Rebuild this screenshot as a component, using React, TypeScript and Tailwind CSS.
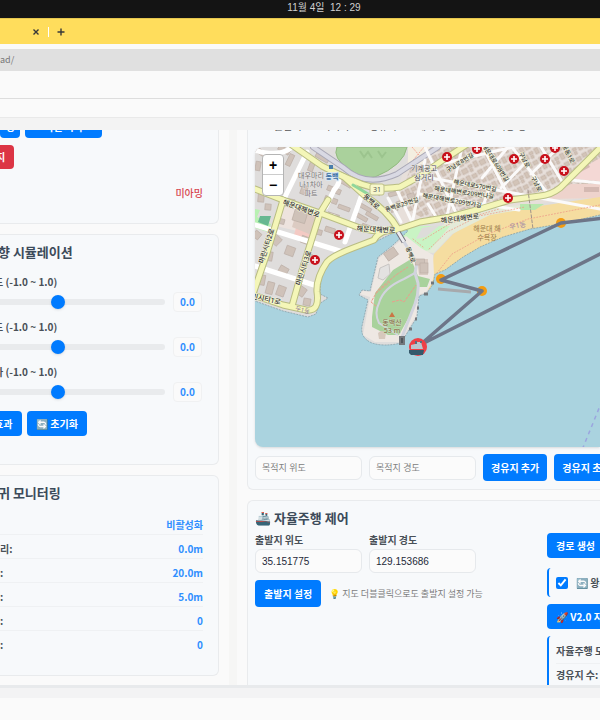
// Boat control dashboard: status panels on the left, map and autopilot on the right
import { useState } from 'react';

const BLOCKS = [
  [262, 153, 14, 5, 35], [258, 166, 5, 9, 10], [284, 150, 12, 5, 30], [290, 160, 5, 12, 25], [304, 190, 6, 9, 20],
  [322, 158, 14, 4, 30], [312, 165, 5, 13, 20], [334, 190, 14, 5, 22], [345, 183, 14, 4, 30], [331, 200, 13, 5, 20],
  [344, 208, 12, 4, 20], [364, 207, 16, 4, 30], [372, 216, 13, 4, 30], [361, 217, 14, 4, 30], [366, 226, 8, 3, 20],
  [333, 216, 12, 5, 18], [330, 230, 10, 5, 18], [377, 192, 8, 4, 30], [393, 194, 9, 4, -15], [401, 203, 9, 5, -20],
  [394, 209, 7, 5, -20], [411, 196, 7, 5, -20], [261, 198, 6, 8, 5], [268, 207, 6, 6, 5], [290, 203, 9, 8, 10],
  [300, 216, 13, 12, 17], [276, 240, 9, 9, 45], [290, 251, 9, 9, 20], [268, 256, 9, 9, 10], [283, 271, 9, 9, 30],
  [305, 240, 8, 7, 20], [308, 256, 7, 7, 35], [262, 280, 6, 10, 10], [270, 288, 7, 12, 15], [281, 291, 8, 10, 20],
  [301, 291, 9, 9, 35], [307, 302, 7, 7, 10], [257, 235, 7, 7, 40], [391, 254, 12, 9, -35], [420, 262, 9, 6, 0],
  [424, 268, 8, 10, 0], [280, 221, 9, 5, 15], [318, 232, 8, 5, 15],
];

const HOSPITALS = [[339, 235], [315, 260], [447, 157], [477, 149], [514, 159], [545, 159], [555, 148], [564, 171], [508, 198]];

const STREETS = [
  'M307 152L283 201', 'M294 145Q315 160 337 177Q342 181 334 190L326 207', 'M361 197L345 242', 'M255 225L343 252',
  'M255 266L314 285', 'M255 150Q279 158 292 147', 'M291 205L334 217',
];

const LANES = [
  'M420 176L600 209', 'M420 194L519 210', 'M445 163L513 147', 'M425 147L457 215', 'M462 147L447 216', 'M483 147L510 199',
  'M512 147L548 194', 'M541 147L563 183', 'M425 160L412 224', 'M388 198L401 222', 'M396 188L412 222', 'M571 180L600 183',
  'M482 178L508 147', 'M428 204L438 220', 'M489 189L482 209', 'M525 163L501 188', 'M558 148L531 174',
];

const MAIN_ROADS = [
  'M289 143L322 166L344 177L364 195Q388 211 398 229',
  'M255 189L283 200L320 213L360 228Q379 233 399 229L420 222L450 217L480 209L510 200L540 196Q551 195 560 188L602 146',
  'M338 174L354 181Q374 191 400 187L420 176L443 160L466 145',
  'M283 200L267 253L253 294',
  'M328 200L320 213L303 267L292 306',
  'M397 229Q379 230 374 240L353 248Q332 256 327 262Q316 278 317 292Q320 312 306 310L283 305L253 295',
];

const COAST = 'M600 215L560 224L530 229L503 237L480 247L463 257L445 270L435 274L433 284L427 293L419 296L417 317L409 330L401 343Q384 347 372 343Q360 338 362 326L368 300L359 295L362 290L370 291L373 278L378 257L392 246L408 231L403 228L373 243L340 253Q326 260 321 277L320 294L328 298L319 304L316 314L308 317L283 311L255 301';

const STREET_LABELS: [string, number, number, number, number][] = [
  ['해운대해변로', 301, 209, 20, 7], ['해운대해변로', 376, 230, 3, 7], ['동백로', 371, 202, 42, 7], ['마린시티2로', 267, 246, -72, 7],
  ['마린시티3로', 304, 268, -72, 7], ['동백로29번길', 402, 205, -18, 6], ['동백로', 410, 255, 70, 6], ['해운대해변로', 460, 219, -7, 7],
  ['해운대로570번길', 475, 186, 10, 6], ['해운대해변로209번나길', 464, 193, 8, 6], ['해운대해변로209번가길', 452, 201, 10, 6],
  ['구남로8번길', 460, 163, -32, 6], ['해운대로608번길', 495, 163, 57, 6], ['구남로', 524, 160, 62, 6], ['구남로', 536, 184, 62, 6],
  ['중동1로', 568, 154, 64, 6], ['마린시티1로', 263, 299, 12, 7],
];

function MapDrawing() {
  return (
    <svg className="block w-full h-full" viewBox="255 147 345 300" preserveAspectRatio="xMinYMin slice" fontFamily="'Noto Sans','Noto Sans CJK KR',sans-serif" textAnchor="middle">
      <defs>
        <pattern id="houses" width="20" height="17" patternUnits="userSpaceOnUse" patternTransform="rotate(-28)">
          <path d="M1 1h5v4H1zM8 1h4v6H8zM14 2h5v4h-5zM1 8h4v6H1zM7 10h6v5H7zM15 9h4v3h-4zM15 13h3v3h-3z" fill="#d3c4b8" stroke="#bfaea2" strokeWidth="0.6" />
        </pattern>
      </defs>
      <rect x="255" y="147" width="345" height="300" fill="#dfdddc" />
      <path d="M412 147H600V196L500 208L400 228L397 190Z" fill="#e7dfda" />
      <path d="M420 147H600V185L560 187L510 198L425 219L397 205L402 188Z" fill="url(#houses)" />
      <path d="M571 175L600 158V181L571 179Z" fill="#f4d8d5" />
      <path d="M571 184H600V198L548 199L554 192Z" fill="#eed3cc" />
      <path d="M575 168L587 162L590 167L577 174ZM584 187h15v5h-15z" fill="#d4b9b2" />

      <path d="M337 147H407Q404 165 375 177Q364 180 349 169Q332 158 337 147Z" fill="#aad19c" stroke="#91b97f" />
      <path d="M360 151l4 6 4-5 4 6M378 151l4 6 4-5" fill="none" stroke="#9cc48e" strokeWidth="2" />
      <path d="M408 147H430L424 164L408 167Z" fill="#f4eee0" />
      <path d="M412 147L425 162M424 147l-14 17" stroke="#f3a999" strokeDasharray="2 1" />
      <path d="M255 209L260 210L257 217L271 224L268 232L255 228Z" fill="#b8f1b3" />
      <path d="M260 216L271 216L268 226L258 222Z" fill="#67b891" />
      <path d="M283 205L301 211L297 231L276 226Z" fill="#ede3de" />
      <path d="M296 228L312 231L311 239L293 238Z" fill="#f4cac4" />
      <path d="M297 210L320 217L314 236L292 227Z" fill="#dccbc2" />

      <path d="M600 197L567 202L533 207L500 209L480 217L453 234L434 254L428 290L600 216Z" fill="#f5dda0" />
      <path d="M420 238L450 221L500 207L532 204L525 209L490 215L452 234L434 253L420 252Z" fill="#e4ead8" />
      <path d="M400 230L420 226H450L430 250L418 252L404 243Z" fill="#c9f4c4" />
      <path d="M422 228l18-3-14 12-10 2z" fill="#dddcd9" />
      <path d="M520 204h24l-9 6h-15z" fill="#b8e8ad" />

      <path d={`${COAST}V447H600Z`} fill="#aad3df" />
      <path d={COAST} fill="none" stroke="#7e98a2" strokeWidth="0.7" strokeDasharray="2 1" />

      <path d="M374 279L379 258L393 247L406 236L421 248L433 255L434 274L432 283L426 292L418 295L416 316L408 329L400 342H375L363 335L370 297L360 294L363 291L371 292Z" fill="#eee8e3" />
      <path d="M411 259L393 270L375 293L372 317V327L388 335H399L409 317L416 300L418 287L427 287L430 279L418 276Z" fill="#a9d29c" />
      <path d="M380 268l9-4 1 10-7 6-5-2z" fill="#e3e2e1" stroke="#c8c5c3" />
      <path d="M417 259h11v16h-9z" fill="#d9cbc2" />
      <path d="M398 232L417 263L415 273L418 283Q419 294 415 304L402 337" fill="none" stroke="#d2d4de" strokeWidth="3" />
      <path d="M415 273L404 279Q383 288 379 303Q374 313 379 323L398 335" fill="none" stroke="#d2d4de" strokeWidth="2" />
      <path d="M376 306l-5-4 7-12 18-15 12-8M392 302l8-2 4 2 12-17M376 293l14-11" fill="none" stroke="#ec9d8b" strokeWidth="1" strokeDasharray="3 1" />
      <path d="M378 333q4-4 8 0l-1 6h-6z" fill="#d6c8bc" />
      <path d="M400 337h4v7h-4z" fill="#50565b" stroke="#74787c" strokeWidth="2" />
      <path d="M409 329h3M415 319h2M417 308h2M424 294h4M431 283h3" stroke="#74787c" strokeWidth="3" />
      <path d="M389 317l3-5 3 5z" fill="#ca7645" />

      {BLOCKS.map(([x, y, w, h, angle]) => (
        <rect key={`${x}-${y}`} x={x - w / 2} y={y - h / 2} width={w} height={h} transform={`rotate(${angle} ${x} ${y})`} fill="#cfc2b9" stroke="#bcafa7" strokeWidth="0.7" />
      ))}

      <g fill="none" strokeLinecap="round" strokeLinejoin="round">
        <path d="M313 147L344 168Q366 188 397 174L438 147" stroke="#aaa9b7" strokeWidth="6" />
        <path d="M313 147L344 168Q366 188 397 174L438 147" stroke="#d9d9e3" strokeWidth="4" />
        {STREETS.map((d) => <path key={d} d={d} stroke="#ffffff" strokeWidth="5" />)}
        {LANES.map((d) => <path key={d} d={d} stroke="#fbfafa" strokeWidth="3" />)}
        {MAIN_ROADS.map((d) => <path key={d} d={d} stroke="#b9bd83" strokeWidth="7" />)}
        {MAIN_ROADS.map((d) => <path key={d} d={d} stroke="#f4f6b8" strokeWidth="5" />)}
        <path d="M353 185l15 9" stroke="#90d69b" strokeWidth="3" />
        <path d="M423 240l28-17 48-14M429 249l18-17 32-16 46-9M423 247l-10-8M437 273l15-19 36-20 40-15 72-14" stroke="#ed9c88" strokeWidth="0.8" strokeDasharray="1 2" />
        <path d="M528 190l5 39" stroke="#9f928a" strokeDasharray="3 2" />
        <path d="M398 232l6 10" stroke="#74737e" strokeWidth="5" strokeLinecap="butt" />
        <path d="M398 232l6 10" stroke="#ececf0" strokeWidth="3" strokeLinecap="butt" />
      </g>

      <rect x="370" y="184" width="14" height="11" rx="2" fill="#f7f7cc" stroke="#bfc18a" />
      <text x="377" y="192" fontSize="7" fill="#555555">31</text>
      <path d="M329 165h4v4h-4z" fill="#4a7dab" />
      <text x="332" y="179" fontSize="7" fontWeight="bold" fill="#3d6fa5" stroke="#d7e7f1" strokeWidth="2" paintOrder="stroke">동백</text>
      <g fontSize="7" fill="#777477" stroke="#e6e4e3" strokeWidth="1" paintOrder="stroke">
        <text x="311" y="178">대우마리</text>
        <text x="311" y="187">나1차아</text>
        <text x="311" y="196">파트</text>
      </g>
      <g fontSize="7" fill="#4e4b4c" stroke="#eeeceb" strokeWidth="1" paintOrder="stroke">
        <text x="424" y="171">기계공고</text>
        <text x="424" y="180">삼거리</text>
      </g>
      {STREET_LABELS.map(([name, x, y, angle, size]) => (
        <text key={`${name}-${x}`} x={x} y={y} fontSize={size} fontWeight="500" fill="#33332f" stroke="#f6f6df" strokeWidth="1" paintOrder="stroke" dominantBaseline="middle" transform={`rotate(${angle} ${x} ${y})`}>{name}</text>
      ))}
      <g fontSize="7" fill="#9b7b46">
        <text x="487" y="231">해운대 해</text>
        <text x="487" y="240">수욕장</text>
      </g>
      <text x="518" y="228" fontSize="7" fill="#9c86a6" transform="rotate(-10 518 228)">우1동</text>
      <text x="302" y="312" fontSize="6" fill="#8d789a" transform="rotate(15 302 312)">우1동</text>
      <g fontSize="7" fill="#845f42" stroke="#c7dfba" strokeWidth="1" paintOrder="stroke">
        <text x="392" y="325">동백산</text>
        <text x="392" y="333">53 m</text>
      </g>

      {HOSPITALS.map(([x, y]) => (
        <g key={`${x}-${y}`}>
          <circle cx={x} cy={y} r="5" fill="#c8101b" />
          <path d={`M${x - 3} ${y}h6M${x} ${y - 3}v6`} stroke="#ffffff" strokeWidth="1.6" />
        </g>
      ))}

      <path d="M602 401L582 450" stroke="#9ba5df" strokeWidth="1.5" strokeDasharray="4 4" />
      <g fill="#f39c12">
        <circle cx="561" cy="223" r="5" />
        <circle cx="441" cy="279" r="5" />
        <circle cx="482" cy="291" r="5" />
      </g>
      <path d="M438 289L471 292" stroke="#a7a9ac" strokeWidth="3" />
      <path d="M604 218L561 223L441 280L482 291L420 345L604 252" fill="none" stroke="#6d7588" strokeWidth="3.5" strokeLinejoin="round" />
      <circle cx="418" cy="347" r="9" fill="#ef4046" />
      <path d="M409 350h15l-1 5h-12l-2-2z" fill="#34586b" />
      <path d="M411 349v-4l4-1 1-2h5l2 7z" fill="#b9c6ce" />
      <path d="M415 341h2v3h-2zM420 341h2v2h-2z" fill="#58717e" />
    </svg>
  );
}

function Field({ label, value, placeholder }: { label?: string; value?: string; placeholder?: string }) {
  return (
    <label className="block w-[107px] shrink-0">
      {label && <span className="block mb-px text-[10px] leading-4 font-bold text-[#495057]">{label}</span>}
      <input type="text" defaultValue={value} placeholder={placeholder} aria-label={label || placeholder}
        className="block w-full h-6 px-1.5 text-[10px] placeholder:text-[9px] font-['Liberation_Sans','Noto_Sans_CJK_KR',sans-serif] text-gray-800 placeholder-[#808080] bg-[#fbfbfb] border border-[#e6e9ec] rounded-md" />
    </label>
  );
}

function Slider({ label }: { label: string }) {
  const [value, setValue] = useState(0);
  return (
    <label className="block h-[45px]">
      <span className="block -ml-1.5 text-[10px] leading-4 font-bold text-[#495057]">{label}</span>
      <span className="flex items-center gap-2 h-5 mt-0.5">
        <input type="range" min={-1} max={1} step={0.1} value={value} onChange={(e) => setValue(Number(e.target.value))}
          className="flex-1 min-w-0 -ml-[50px] h-1.5 appearance-none rounded-full bg-[#e9ebed] [&::-webkit-slider-thumb]:appearance-none [&::-webkit-slider-thumb]:size-3.5 [&::-webkit-slider-thumb]:rounded-full [&::-webkit-slider-thumb]:bg-[#007bff] [&::-webkit-slider-thumb]:shadow" />
        <span className="w-[29px] h-5 border border-[#f0f1f2] rounded-sm bg-[#fafafa] text-center text-[10px] leading-[18px] font-bold text-[#318fff]">{value.toFixed(1)}</span>
      </span>
    </label>
  );
}

const MONITOR = [
  { label: '', value: '비활성화' },
  { label: '리:', value: '0.0m' },
  { label: ':', value: '20.0m' },
  { label: ':', value: '5.0m' },
  { label: ':', value: '0' },
  { label: ':', value: '0' },
];

const LEGEND = [
  { text: '출발지', dot: 'bg-[#62c96f]' },
  { text: '목적지', dot: 'bg-[#f0706b]' },
  { text: '경유지', dot: 'bg-[#f4bd3c]' },
  { text: '계획 경로', dot: '' },
  { text: '실제 이동 경로', dot: '' },
];

const BTN = 'shrink-0 rounded bg-[#007bff] text-white text-[10px] font-bold whitespace-nowrap';

export default function App() {
  const [roundTrip, setRoundTrip] = useState(true);

  return (
    <div className="h-screen flex flex-col overflow-hidden bg-[#fafafa] font-['Noto_Sans_CJK_KR',sans-serif]">
      <header className="shrink-0">
        <div className="h-[18px] bg-[#141414] pl-12 text-center text-[10px] leading-4 text-[#d0d0d0] whitespace-pre font-['Liberation_Sans','Noto_Sans_CJK_KR',sans-serif]">11월 4일  12 : 29</div>
        <div className="h-[26px] bg-[#ffdd5c] border-t border-[#e5c64f] flex items-center gap-[7px] pl-[31px]">
          <button aria-label="Close tab" className="size-2.5">
            <svg viewBox="0 0 10 10" className="size-2.5"><path d="M2.5 2.5l5 5M7.5 2.5l-5 5" stroke="#383838" strokeWidth="1.4" /></svg>
          </button>
          <span className="w-px h-2.5 bg-white" />
          <button aria-label="New tab" className="size-2.5">
            <svg viewBox="0 0 10 10" className="size-2.5"><path d="M5 1.5v7M1.5 5h7" stroke="#383838" strokeWidth="1.4" /></svg>
          </button>
        </div>
        <div className="h-[22px] mt-[5px] bg-[#e0e0e0] text-[9px] leading-[22px] text-[#777777]">ad/</div>
        <div className="h-7 border-b border-[#dddddd]" />
        <div className="h-[18px]" />
        <div className="h-[13px] bg-[#f3f3f3] border-t border-[#e9e9e9]" />
      </header>

      <main className="flex-1 min-h-0 flex overflow-hidden">
        <div className="w-[229px] shrink-0 pr-2.5 flex flex-col gap-2.5 overflow-hidden">
          <section className="h-[94px] shrink-0 bg-[#f7f9fb] border-r border-b border-[#e9ebed] rounded-br-md pr-[15px]">
            <div className="h-2 flex items-end gap-[5px] overflow-hidden">
              <button className={`${BTN} w-5 h-6 overflow-hidden`}>경</button>
              <button className={`${BTN} w-[77px] h-6`}>미션 시작</button>
            </div>
            <button className="block w-3.5 h-6 mt-[7px] rounded-r bg-[#dc3545] text-white text-[10px] leading-6 font-bold overflow-hidden">
              <span className="block -ml-1 text-left">지</span>
            </button>
            <p className="mt-4 text-right text-[10px] leading-4 font-medium text-[#d84850]">미아밍</p>
          </section>

          <section className="h-[231px] shrink-0 bg-[#f7f9fb] border border-l-0 border-[#e9ebed] rounded-r-md pr-4 pt-[7px]">
            <h2 className="-ml-0.5 text-[13px] leading-5 font-bold text-[#3c4b5a]">향 시뮬레이션</h2>
            <div className="mt-3">
              <Slider label="드 (-1.0 ~ 1.0)" />
              <Slider label="드 (-1.0 ~ 1.0)" />
              <Slider label="차 (-1.0 ~ 1.0)" />
            </div>
            <div className="flex gap-[5px] mt-[2px]">
              <button className={`${BTN} w-[22px] h-[25px] rounded-l-none overflow-hidden`}><span className="block -ml-1.5 text-left">효과</span></button>
              <button className={`${BTN} w-[60px] h-[25px]`}>🔄 초기화</button>
            </div>
          </section>

          <section className="h-[201px] shrink-0 bg-[#f7f9fb] border border-l-0 border-[#e9ebed] rounded-r-md pr-[15px] pt-[7px]">
            <h2 className="-ml-0.5 text-[13px] leading-5 font-bold text-[#3c4b5a]">귀 모니터링</h2>
            <dl className="mt-2 text-[10px] divide-y divide-[#eff1f3]">
              {MONITOR.map((m, i) => (
                <div key={i} className="flex justify-between h-6 pt-1 leading-5">
                  <dt className="font-bold text-[#495057]">{m.label}</dt>
                  <dd className="font-bold text-[#2f8fff]">{m.value}</dd>
                </div>
              ))}
            </dl>
          </section>
        </div>

        <div className="w-2 shrink-0 bg-[#f6f6f5]" />

        <div className="flex-1 min-w-0 pl-2.5 flex flex-col gap-2.5 overflow-hidden">
          <section className="shrink-0 bg-[#f7f9fb] border-l border-b border-[#e9ebed] rounded-bl-md pl-[7px] pb-2">
            <div className="h-[17px] overflow-hidden">
              <ul className="flex gap-2 pl-[7px] -mt-3 text-[10px] leading-4 text-[#555555] whitespace-nowrap">
                {LEGEND.map((l) => (
                  <li key={l.text} className="flex items-center gap-1">
                    <span className={`size-2 rounded-full ${l.dot}`} />
                    {l.text}
                  </li>
                ))}
              </ul>
            </div>
            <div className="relative h-[300px] rounded-l-lg overflow-hidden shadow">
              <MapDrawing />
              <div className="absolute left-[7px] top-[7px] w-[22px] border border-[#b5b5b5] rounded-sm overflow-hidden bg-white divide-y divide-[#cccccc]">
                <button aria-label="Zoom in" className="block w-full h-5 text-sm leading-5 font-bold font-['Liberation_Sans',sans-serif]">+</button>
                <button aria-label="Zoom out" className="block w-full h-5 text-sm leading-5 font-bold font-['Liberation_Sans',sans-serif]">−</button>
              </div>
            </div>
            <div className="flex items-center gap-[7px] h-[27px] mt-[7px]">
              <Field placeholder="목적지 위도" />
              <Field placeholder="목적지 경도" />
              <button className={`${BTN} h-[27px] px-2`}>경유지 추가</button>
              <button className={`${BTN} h-[27px] px-2`}>경유지 초기화</button>
            </div>
          </section>

          <section className="flex-1 min-h-0 overflow-hidden bg-[#f7f9fb] border-l border-t border-[#e9ebed] rounded-tl-md pl-[7px] pt-[7px]">
            <h2 className="text-[13px] leading-5 font-bold text-[#3c4b5a]">🚢 자율주행 제어</h2>
            <div className="grid grid-cols-[280px_280px] gap-3 mt-px">
              <div className="pt-[3px]">
                <div className="flex gap-[7px]">
                  <Field label="출발지 위도" value="35.151775" />
                  <Field label="출발지 경도" value="129.153686" />
                </div>
                <div className="flex items-center gap-2 mt-[7px]">
                  <button className={`${BTN} h-[27px] px-[9px]`}>출발지 설정</button>
                  <p className="text-[9px] text-[#7d7d7d] whitespace-nowrap">💡 지도 더블클릭으로도 출발지 설정 가능</p>
                </div>
              </div>
              <div className="pt-1 flex flex-col items-start gap-[7px] whitespace-nowrap">
                <button className={`${BTN} h-[25px] px-[9px]`}>경로 생성</button>
                <label className="mt-[3px] w-full h-[29px] flex items-center gap-2 pl-[7px] border-l-2 border-[#007bff] rounded-l text-[10px] font-bold text-[#495057]">
                  <input type="checkbox" checked={roundTrip} onChange={(e) => setRoundTrip(e.target.checked)} className="size-3 accent-[#007bff]" />
                  🔄 왕복 운항
                </label>
                <button className={`${BTN} h-[25px] px-[9px]`}>🚀 V2.0 자율주행</button>
                <dl className="w-full pt-1 pl-[7px] border-l-2 border-[#007bff] rounded-l text-[10px] leading-[22px] font-bold text-[#495057] divide-y divide-[#eff1f3]">
                  <dt className="h-6">자율주행 모드:</dt>
                  <dt className="h-6">경유지 수:</dt>
                </dl>
              </div>
            </div>
          </section>
        </div>
      </main>

      <footer className="shrink-0">
        <div className="h-[13px] bg-[#f3f3f4] border-t-3 border-[#e8eaec]" />
        <div className="h-[22px] bg-[#fafafa]" />
      </footer>
    </div>
  );
}
